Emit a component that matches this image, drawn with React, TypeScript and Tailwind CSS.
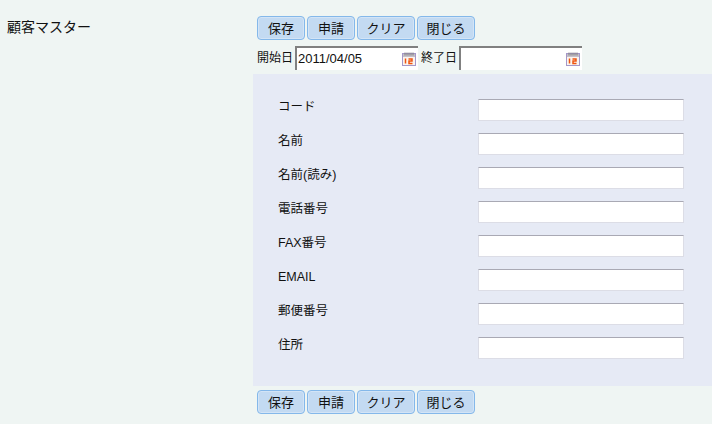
const font = { fontFamily: '"Liberation Sans", "Noto Sans CJK JP", sans-serif' };

function Cal() {
  return (
    <svg width="14" height="14" viewBox="0 0 14 14" className="shrink-0">
      <rect x="0.5" y="1.5" width="13" height="12" fill="#fbf4ee" stroke="#a497c8" />
      <rect x="1" y="2" width="12" height="3" fill="#c4c0c8" />
      <path d="M3 0.5v3M5 0.5v3M7 0.5v3M9 0.5v3M11 0.5v3" stroke="#808080" strokeWidth="1" />
      <path d="M3.5 6.5v5M6.5 7h3.5v2H7v2.5h3.5" stroke="#f0540f" strokeWidth="1.5" fill="none" />
    </svg>
  );
}

function Btn({ label, w }: { label: string; w: string }) {
  return (
    <button className={`h-6 ${w} rounded-[4px] border border-[#84b8ea] bg-[#c3daf2] shadow-[inset_0_0_0_1px_#d3e4f6] text-[13px] leading-none text-[#111] flex items-center justify-center`}>
      {label}
    </button>
  );
}

function Buttons() {
  return (
    <div className="flex gap-[2px] pl-[4px] h-6">
      <Btn label="保存" w="w-[48px]" />
      <Btn label="申請" w="w-[48px]" />
      <Btn label="クリア" w="w-[58px]" />
      <Btn label="閉じる" w="w-[58px]" />
    </div>
  );
}

function DateBox({ value }: { value?: string }) {
  return (
    <div className="h-6 w-[123px] flex items-center justify-between bg-white border-t-2 border-l-2 border-[#808080] pl-[1px] pr-[2px]">
      <span className="text-[13px] leading-none text-[#111] -mt-[1px]">{value}</span>
      <Cal />
    </div>
  );
}

const rows = ["コード", "名前", "名前(読み)", "電話番号", "FAX番号", "EMAIL", "郵便番号", "住所"];

export default function App() {
  return (
    <div className="w-[712px] h-[424px] overflow-hidden bg-[#eff5f3] flex text-[#111]" style={font}>
      <div className="w-[253px] shrink-0 pl-[7px] pt-[17px] text-[14px] leading-[20px]">顧客マスター</div>
      <div className="w-[459px] flex flex-col pt-[16px]">
        <Buttons />
        <div className="flex items-center h-6 mt-[6px] pl-[4px] text-[12px]">
          <span className="w-[38px] leading-none">開始日</span>
          <DateBox value="2011/04/05" />
          <span className="w-[41px] pl-[3px] leading-none">終了日</span>
          <DateBox />
        </div>
        <div className="h-[312px] bg-[#e6eaf5] pt-[25px] flex flex-col gap-[12px] mt-[4px]">
          {rows.map((r) => (
            <div key={r} className="flex h-[22px] pl-[25px]">
              <div className="w-[200px] text-[12.5px] leading-[18px] -mt-[1px]">{r}</div>
              <div className="w-[206px] h-[22px] bg-white border border-[#dcdde6] border-t-[#a9a9b4]" />
            </div>
          ))}
        </div>
        <div className="mt-[4px]">
          <Buttons />
        </div>
      </div>
    </div>
  );
}
